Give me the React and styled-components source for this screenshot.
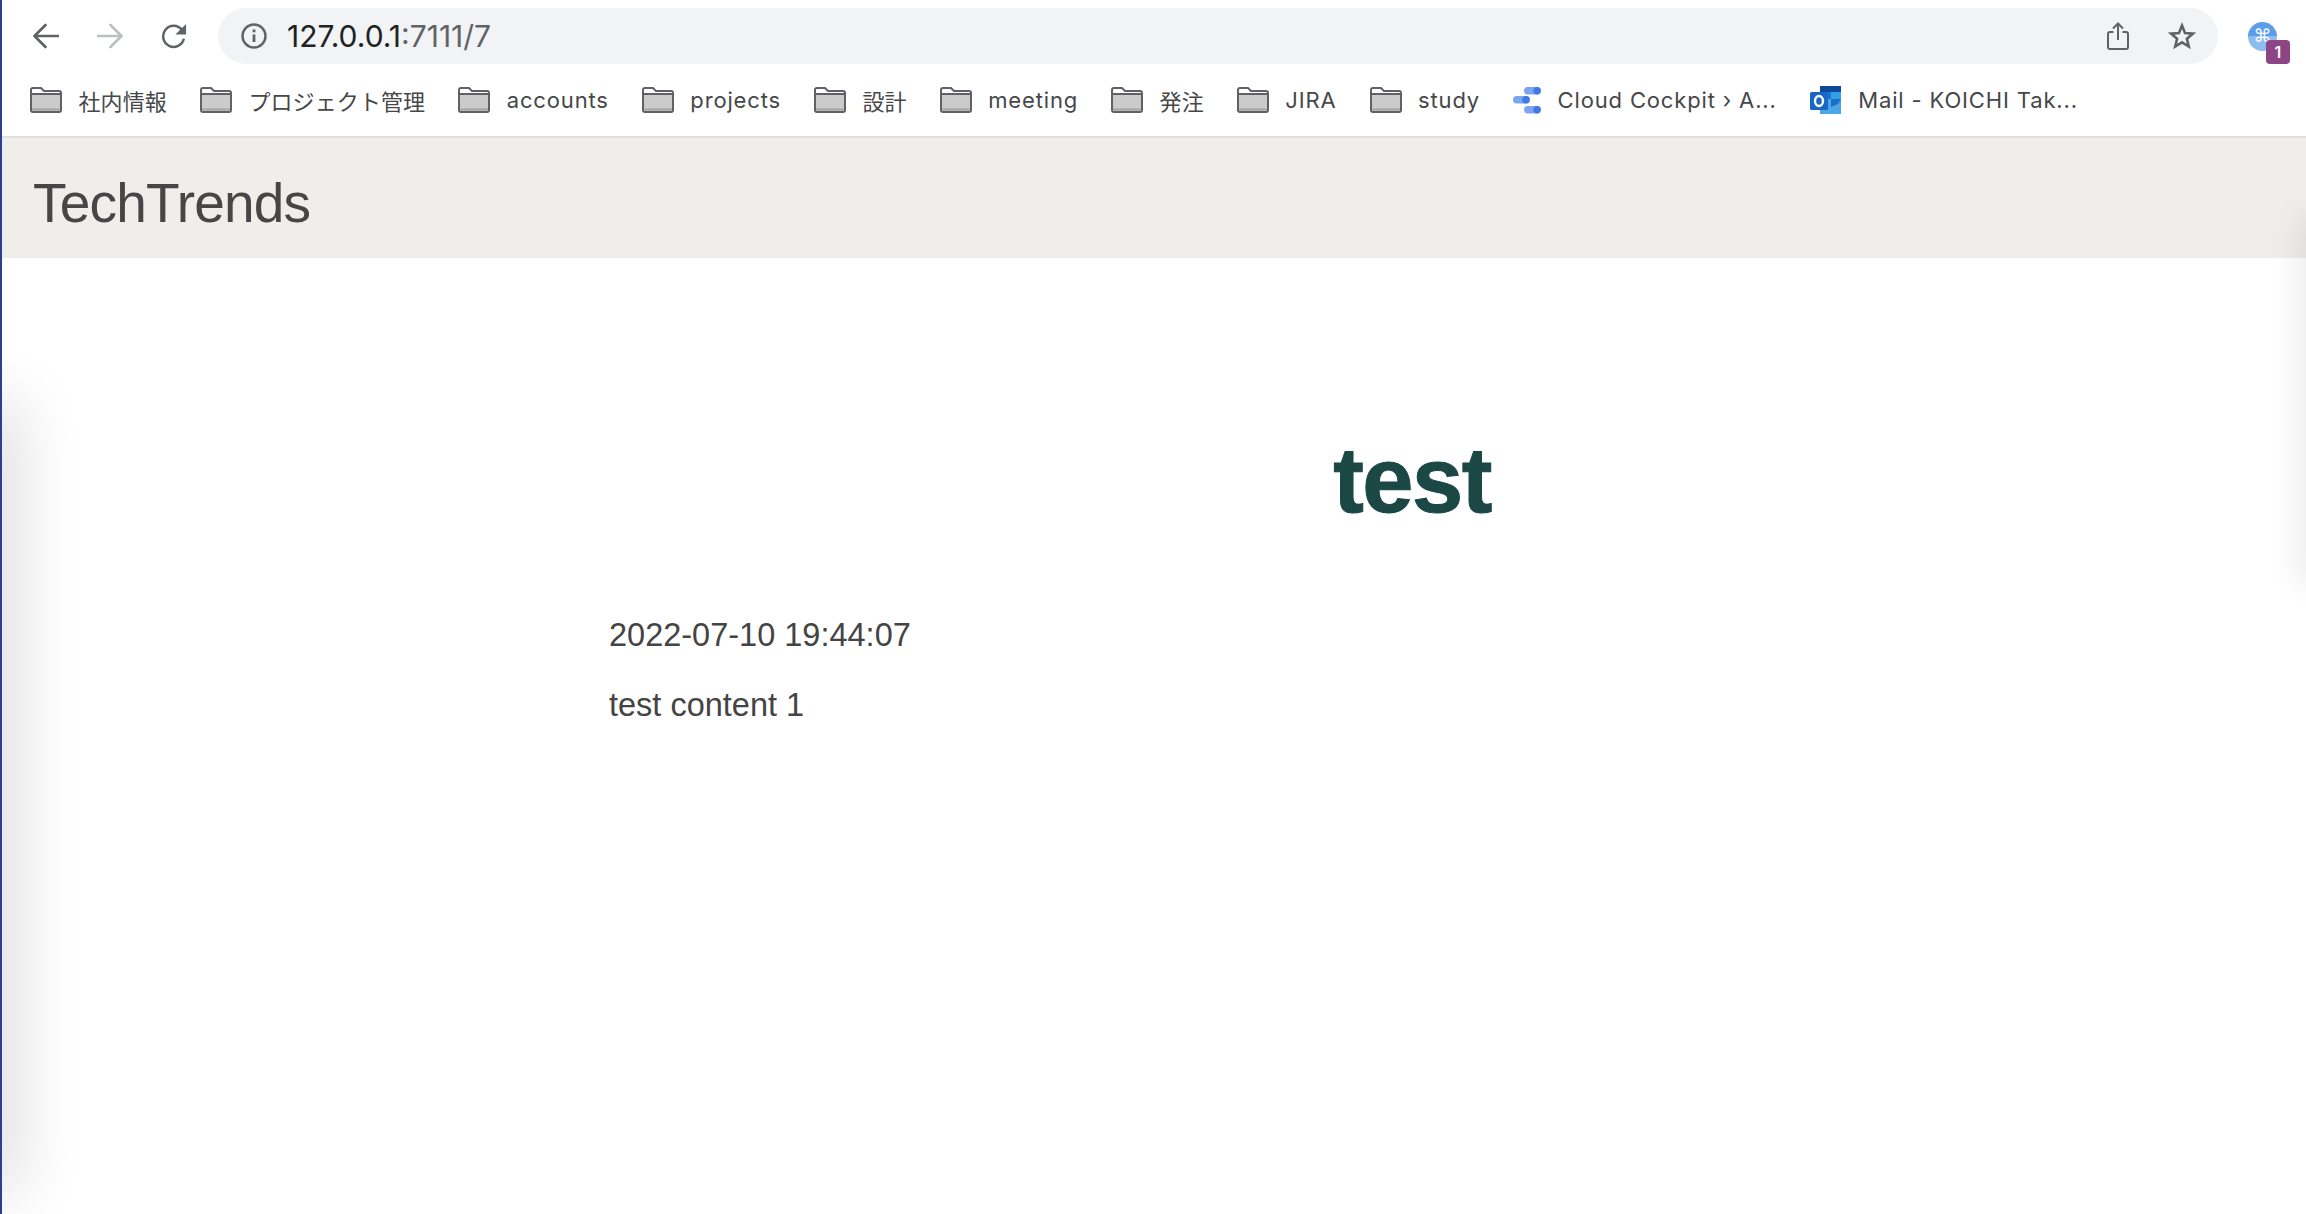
import React from 'react';
import styled, { createGlobalStyle } from 'styled-components';

const GlobalStyle = createGlobalStyle`
  html, body { margin: 0; padding: 0; background: #fff; }
  body { font-family: "Liberation Sans", Arial, sans-serif; overflow: hidden; }
`;

const Page = styled.div`
  position: relative;
  height: 1214px;
  border-left: 2px solid #2c3f93;
  overflow: hidden;
  background: #fff;
`;

const Toolbar = styled.div`
  display: flex;
  align-items: center;
  height: 72px;
  padding-left: 31px;
  box-sizing: border-box;
`;

const NavButton = styled.div`
  display: flex;
  width: 26px;
  height: 26px;
  margin-right: ${(p) => p.$gap}px;
  color: ${(p) => p.$disabled ? '#bdc0c3' : '#5f6368'};
`;

const Omnibox = styled.div`
  display: flex;
  align-items: center;
  width: 2000px;
  height: 56px;
  padding: 0 22px 0 23px;
  box-sizing: border-box;
  border-radius: 28px;
  background: #f1f3f4;
  color: #5f6368;
`;

const Url = styled.div`
  flex: 1;
  margin-left: 20px;
  font-family: Inter, "Liberation Sans", sans-serif;
  font-size: 30px;
  color: #5f6368;
  b { font-weight: 400; color: #202124; }
`;

const OmniActions = styled.div`
  display: flex;
  align-items: center;
  gap: 39px;
`;

const Extension = styled.div`
  position: relative;
  width: 29px;
  height: 29px;
  margin-left: 30px;
  border-radius: 50%;
  background: linear-gradient(#5b9de9 50%, #8dbcf0 50%);
  color: #fff;
  display: flex;
  align-items: center;
  justify-content: center;
  font-family: "DejaVu Sans", sans-serif;
  font-size: 18px;
  line-height: 1;
`;

const Badge = styled.span`
  position: absolute;
  left: 18px;
  top: 18px;
  width: 24px;
  height: 24px;
  border-radius: 4px;
  background: #8e4585;
  color: #fff;
  font-family: Inter, sans-serif;
  font-size: 16px;
  font-weight: 600;
  line-height: 24px;
  text-align: center;
`;

const BookmarkBar = styled.div`
  display: flex;
  align-items: center;
  gap: 33px;
  height: 66px;
  padding: 0 0 9px 28px;
  box-sizing: border-box;
  border-bottom: 2px solid #dedede;
`;

const Bookmark = styled.div`
  display: flex;
  align-items: center;
  gap: 16.5px;
  font-family: Inter, "Noto Sans CJK JP", sans-serif;
  font-size: 22px;
  letter-spacing: ${(p) => p.$cjk ? 0.1 : 0.85}px;
  color: #454749;
  white-space: nowrap;
`;

const Navbar = styled.div`
  display: flex;
  align-items: center;
  height: 120px;
  padding: 9px 0 0 31px;
  box-sizing: border-box;
  background: #efeeeb;
`;

const Brand = styled.div`
  font-size: 55px;
  letter-spacing: -0.8px;
  color: #464646;
`;

const Main = styled.main`
  padding: 167px 0 0 607px;
  width: 1606px;
`;

const Title = styled.h1`
  margin: 0;
  text-align: center;
  font-size: 92px;
  font-weight: 700;
  line-height: 110px;
  letter-spacing: -1.5px;
  -webkit-text-stroke: 1px #1b4745;
  color: #1b4745;
`;

const Stamp = styled.p`
  margin: 80px 0 0;
  font-size: 32.5px;
  line-height: 40px;
  color: #444;
`;

const Body = styled.p`
  margin: 30px 0 0;
  font-size: 32.5px;
  line-height: 40px;
  color: #444;
`;

const WindowShadow = styled.div`
  position: absolute;
  left: -30px;
  top: ${(p) => p.$top}px;
  bottom: ${(p) => p.$bottom}px;
  width: 30px;
  pointer-events: none;
  box-shadow: 0 0 62px 20px rgba(0, 0, 0, 0.12);
`;

const RightShadow = styled.div`
  position: absolute;
  right: -20px;
  top: 225px;
  height: 350px;
  width: 20px;
  pointer-events: none;
  box-shadow: 0 0 30px 10px rgba(0, 0, 0, 0.07);
`;

const Back = () => (
  <svg width="26" height="26" viewBox="0 0 26 26" fill="none" stroke="currentColor" strokeWidth="2.6" strokeLinecap="round" strokeLinejoin="round">
    <path d="M25 13H2M12.5 2 1.500 13l11 11" />
  </svg>
);

const Forward = () => (
  <svg width="26" height="26" viewBox="0 0 26 26" fill="none" stroke="currentColor" strokeWidth="2.6" strokeLinecap="round" strokeLinejoin="round">
    <path d="M1 13h23M13.500 2l11 11-11 11" />
  </svg>
);

const Reload = () => (
  <svg width="28" height="26" viewBox="0 0 28 26">
    <path d="M22.500 6.400A11.300 11.300 0 1 0 24.600 16" fill="none" stroke="currentColor" strokeWidth="2.7" />
    <path d="M27 0v11.500H15.500z" fill="currentColor" />
  </svg>
);

const Info = () => (
  <svg width="26" height="26" viewBox="0 0 26 26" fill="none" stroke="currentColor">
    <circle cx="13" cy="13" r="11.500" strokeWidth="2.4" />
    <path d="M13 11.500v7.500" strokeWidth="2.8" />
    <path d="M13 6.500v2.800" strokeWidth="2.8" />
  </svg>
);

const Share = () => (
  <svg width="22" height="28" viewBox="0 0 22 28" fill="none" stroke="currentColor" strokeWidth="2">
    <path d="M6.500 10H3a2 2 0 0 0-2 2v13a2 2 0 0 0 2 2h16a2 2 0 0 0 2-2V12a2 2 0 0 0-2-2h-3.500" />
    <path d="M11 18V2M6 6.500 11 1.500l5 5" />
  </svg>
);

const Star = () => (
  <svg width="28" height="28" viewBox="0 0 28 28" fill="none" stroke="currentColor" strokeWidth="2.600" strokeLinejoin="miter">
    <path d="M14 3.500 17 11l8 .6-6.100 5.200 1.900 7.800L14 20.400l-6.800 4.200 1.900-7.800L3 11.600 11 11z" />
  </svg>
);

const Folder = () => (
  <svg width="32" height="26" viewBox="0 0 32 26">
    <path d="M1 3a2 2 0 0 1 2-2h8l3 3h15a2 2 0 0 1 2 2v17a2 2 0 0 1-2 2H3a2 2 0 0 1-2-2z" fill="#fff" stroke="#5f6164" strokeWidth="2" />
    <path d="M2 8h28v15a1 1 0 0 1-1 1H3a1 1 0 0 1-1-1z" fill="#cbcbcb" />
    <path d="M2 7h28" stroke="#5f6164" strokeWidth="2" />
    <path d="M2 22.500h28" stroke="#a4a4a4" strokeWidth="2" />
  </svg>
);

const CloudCockpit = () => (
  <svg width="28" height="28" viewBox="0 0 28 28">
    <rect x="11" y="1" width="17" height="7.500" rx="3.700" fill="#7ba6ef" />
    <circle cx="24" cy="4.700" r="3.700" fill="#3f7ae4" />
    <rect x="0" y="10" width="17" height="7.500" rx="3.700" fill="#7ba6ef" />
    <circle cx="13" cy="13.700" r="3.700" fill="#3f7ae4" />
    <rect x="11" y="20" width="17" height="7.500" rx="3.700" fill="#7ba6ef" />
    <circle cx="24" cy="23.700" r="3.700" fill="#3f7ae4" />
  </svg>
);

const Outlook = () => (
  <svg width="32" height="30" viewBox="0 0 32 30">
    <rect x="10" y="1" width="21" height="6" fill="#0f4a9a" />
    <rect x="10" y="7" width="11" height="7" fill="#1a76d2" />
    <rect x="21" y="7" width="10" height="7" fill="#32a0e6" />
    <rect x="10" y="14" width="21" height="15" fill="#4aa6e6" />
    <path d="M21 14h10l-3 5-7 3z" fill="#1a6fc9" />
    <rect x="0" y="7" width="18" height="18" rx="1.500" fill="#1a66c4" />
    <ellipse cx="9" cy="16" rx="4" ry="5" fill="none" stroke="#fff" strokeWidth="2.400" />
  </svg>
);

const folders = [
  { name: '社内情報', cjk: true },
  { name: 'プロジェクト管理', cjk: true },
  { name: 'accounts' },
  { name: 'projects' },
  { name: '設計', cjk: true },
  { name: 'meeting' },
  { name: '発注', cjk: true },
  { name: 'JIRA' },
  { name: 'study' },
];

const App = () => {
  return (
    <Page>
      <GlobalStyle />
      <Toolbar>
        <NavButton $gap={38}><Back /></NavButton>
        <NavButton $disabled $gap={38}><Forward /></NavButton>
        <NavButton $gap={31}><Reload /></NavButton>
        <Omnibox>
          <Info />
          <Url><b>127.0.0.1</b>:7111/7</Url>
          <OmniActions>
            <Share />
            <Star />
          </OmniActions>
        </Omnibox>
        <Extension>
          ⌘
          <Badge>1</Badge>
        </Extension>
      </Toolbar>
      <BookmarkBar>
        {folders.map((item) => (
          <Bookmark key={item.name} $cjk={item.cjk}><Folder />{item.name}</Bookmark>
        ))}
        <Bookmark><CloudCockpit />Cloud Cockpit › A...</Bookmark>
        <Bookmark><Outlook />Mail - KOICHI Tak...</Bookmark>
      </BookmarkBar>
      <Navbar>
        <Brand>TechTrends</Brand>
      </Navbar>
      <Main>
        <Title>test</Title>
        <Stamp>2022-07-10 19:44:07</Stamp>
        <Body>test content 1</Body>
      </Main>
      <WindowShadow $top={420} $bottom={40} />
      <RightShadow />
    </Page>
  );
};

export default App;
